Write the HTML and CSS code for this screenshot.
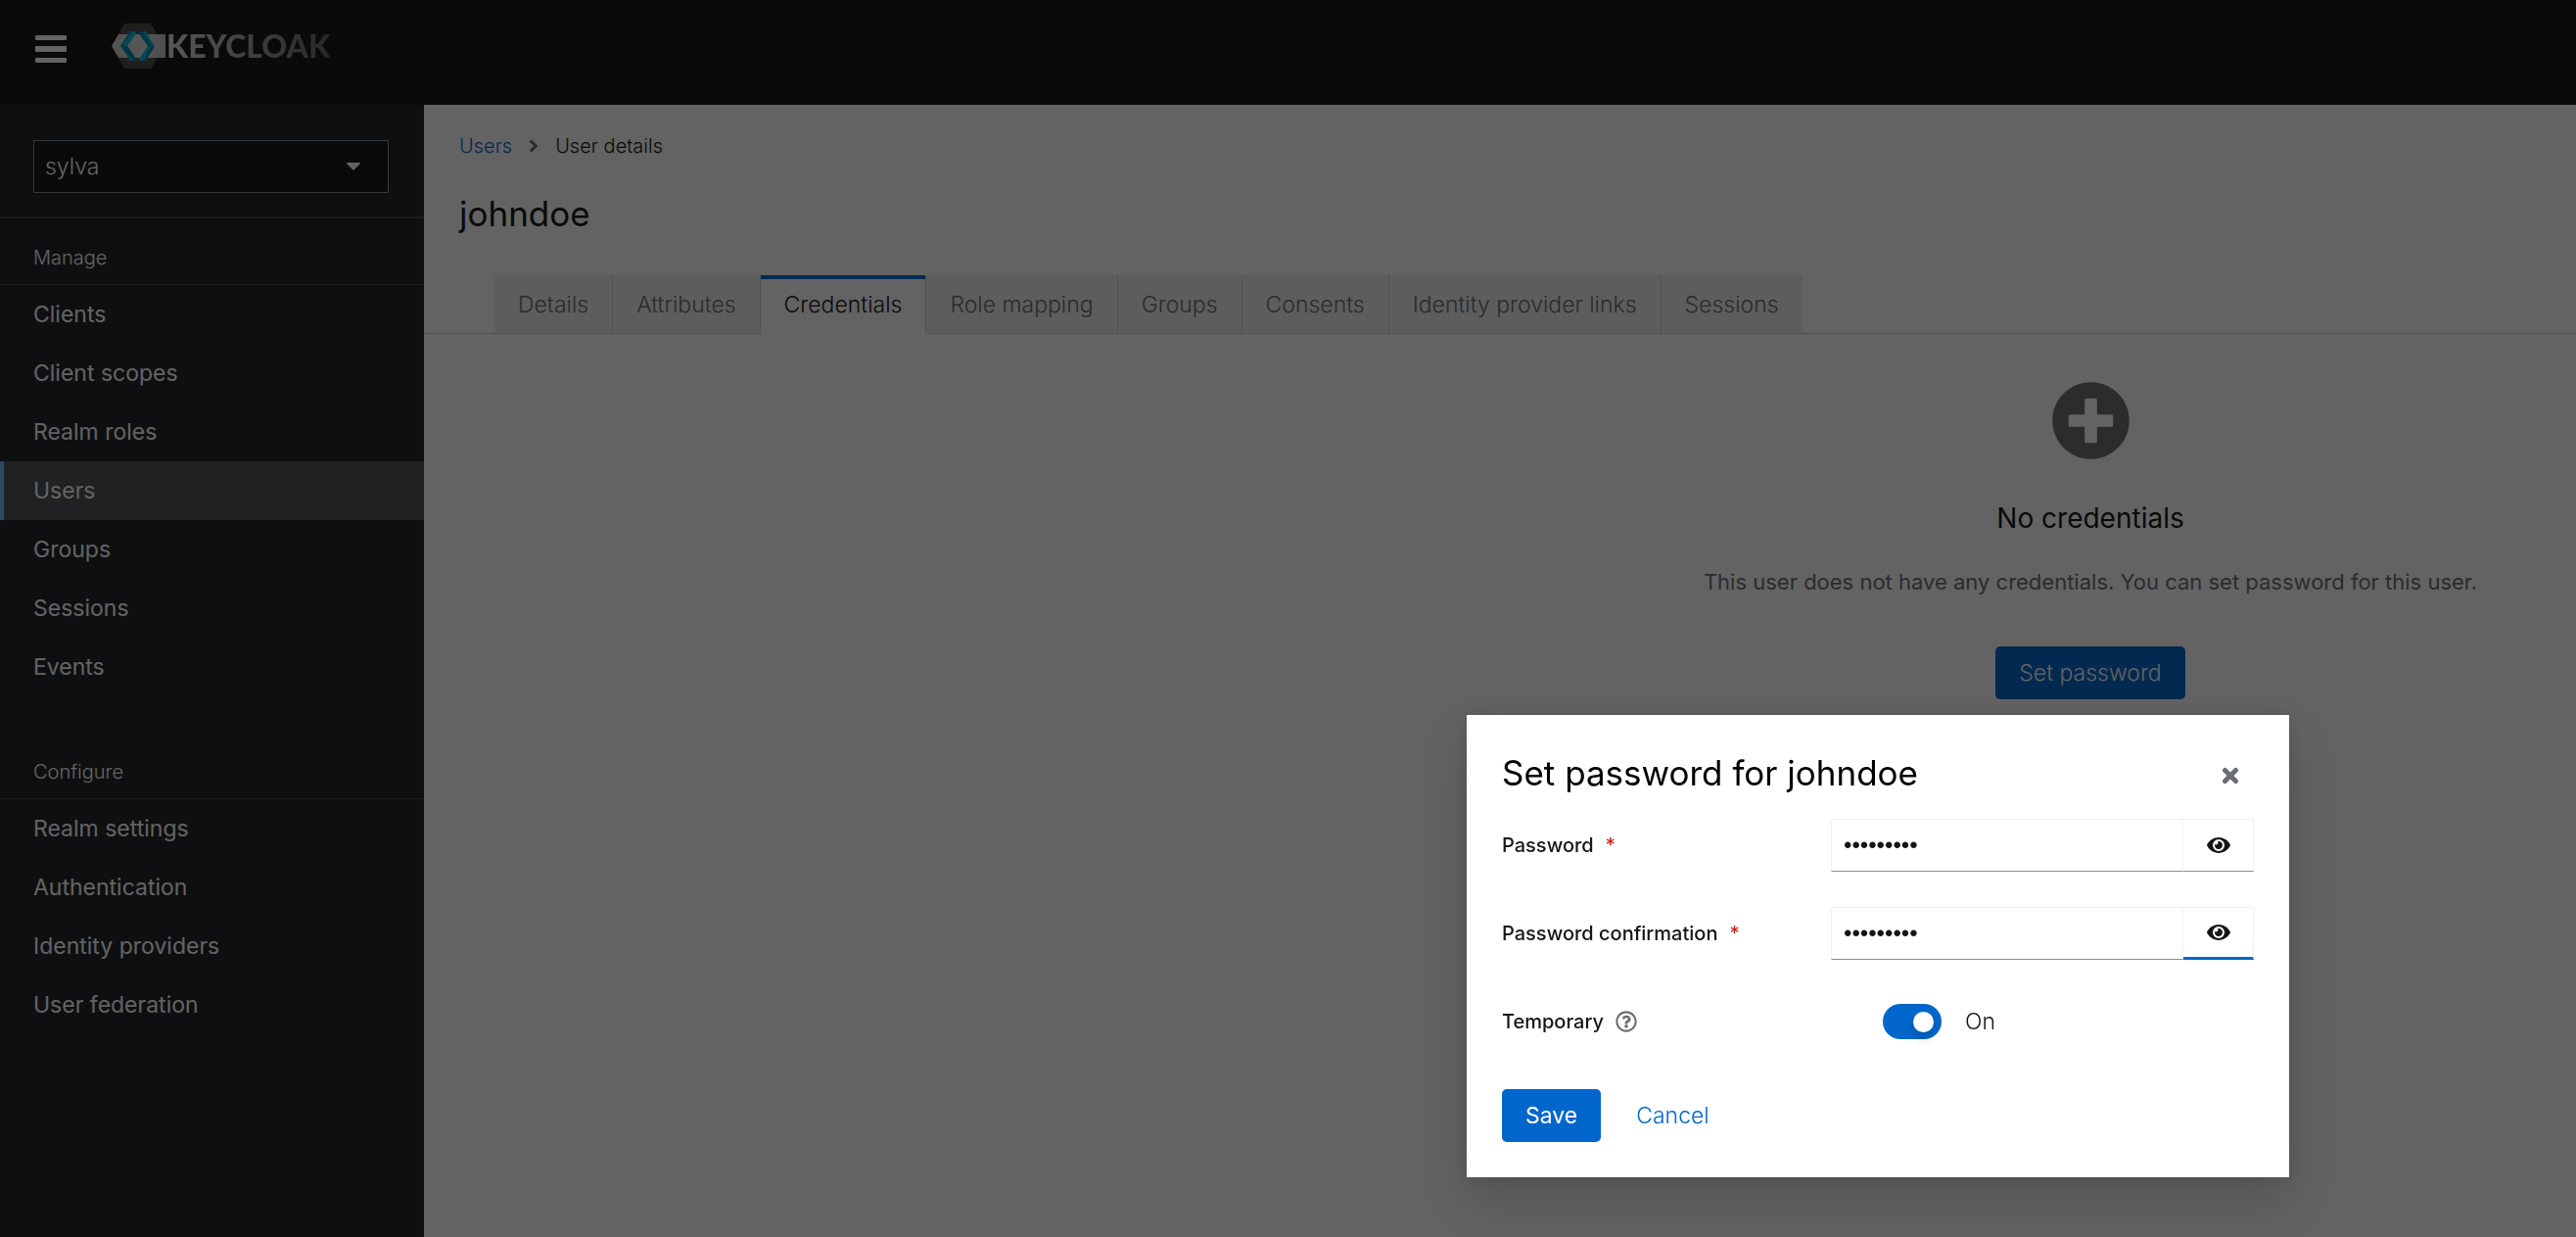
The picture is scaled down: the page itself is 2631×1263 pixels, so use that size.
FILE: index.html
```html
<!DOCTYPE html>
<html lang="en">
<head>
<meta charset="utf-8">
<title>Keycloak Administration Console</title>
<link rel="stylesheet" href="styles.css">
</head>
<body>
<div class="page">
  <header class="masthead">
    <button class="menu-toggle" type="button" aria-label="Global navigation">
      <svg width="32" height="28" viewBox="0 0 32 28"><rect width="32" height="5" rx="1"/><rect y="11" width="32" height="6" rx="1"/><rect y="23" width="32" height="5" rx="1"/></svg>
    </button>
    <a class="brand" href="#">
      <svg class="brand-mark" width="56" height="46" viewBox="0 0 56 46" aria-hidden="true">
        <defs>
          <linearGradient id="band" x1="0" x2="1"><stop offset="0" stop-color="#d0d0d0"/><stop offset=".6" stop-color="#dedede"/><stop offset="1" stop-color="#c4c4c4"/></linearGradient>
        </defs>
        <path fill="#4d4d4d" d="M13 0h27l14 23-14 23H13L0 23z"/>
        <path fill="url(#band)" d="M7 11h48v24H7L0 23z"/>
        <path fill="#00b8e3" d="M19 8h5l1 2-9 13 9 13-1 2h-5L9 23z"/>
        <path fill="#008aaa" d="M19 8h2L11 23H9zM9 23h7l9 13-1 2h-2z"/>
        <path fill="#00b8e3" d="M29 8h6l9 15-9 15h-6l-1-2 9-13-9-13z"/>
        <path fill="#008aaa" d="M44 23l-9 15h-3l8-15zM29 8l-1 2 9 13h4L32 8z"/>
      </svg>
      <span class="brand-name">KEYCLOAK</span>
    </a>
  </header>

  <nav class="sidebar" aria-label="Main">
    <div class="realm">
      <div class="realm-field">
        <select class="realm-select" aria-label="Realm"><option>sylva</option></select>
        <svg class="caret" width="14" height="8" viewBox="0 0 14 8" aria-hidden="true"><path d="M1 0h12q1 0 1 1L8 7q-1 1-2 0L0 1q0-1 1-1z"/></svg>
      </div>
    </div>
    <section class="nav-section">
      <h2 class="nav-title">Manage</h2>
      <ul class="nav-list">
        <li><a class="nav-link" href="#">Clients</a></li>
        <li><a class="nav-link" href="#">Client scopes</a></li>
        <li><a class="nav-link" href="#">Realm roles</a></li>
        <li><a class="nav-link current" href="#" aria-current="page">Users</a></li>
        <li><a class="nav-link" href="#">Groups</a></li>
        <li><a class="nav-link" href="#">Sessions</a></li>
        <li><a class="nav-link" href="#">Events</a></li>
      </ul>
    </section>
    <section class="nav-section">
      <h2 class="nav-title">Configure</h2>
      <ul class="nav-list">
        <li><a class="nav-link" href="#">Realm settings</a></li>
        <li><a class="nav-link" href="#">Authentication</a></li>
        <li><a class="nav-link" href="#">Identity providers</a></li>
        <li><a class="nav-link" href="#">User federation</a></li>
      </ul>
    </section>
  </nav>

  <main class="content">
    <div class="content-head">
      <nav class="breadcrumb" aria-label="Breadcrumb">
        <a href="#">Users</a>
        <svg width="10" height="20" viewBox="0 0 256 512" aria-hidden="true"><path d="M224.3 273l-136 136c-9.4 9.4-24.6 9.4-33.9 0l-22.6-22.6c-9.4-9.4-9.4-24.6 0-33.9l96.4-96.4-96.4-96.4c-9.4-9.4-9.4-24.6 0-33.9L54.3 103c9.4-9.4 24.6-9.4 33.9 0l136 136c9.5 9.4 9.5 24.6.1 34z"/></svg>
        <span>User details</span>
      </nav>
      <h1 class="title">johndoe</h1>
    </div>
    <div class="tabs" role="tablist">
      <button class="tab" type="button" role="tab">Details</button>
      <button class="tab" type="button" role="tab">Attributes</button>
      <button class="tab selected" type="button" role="tab" aria-selected="true">Credentials</button>
      <button class="tab" type="button" role="tab">Role mapping</button>
      <button class="tab" type="button" role="tab">Groups</button>
      <button class="tab" type="button" role="tab">Consents</button>
      <button class="tab" type="button" role="tab">Identity provider links</button>
      <button class="tab" type="button" role="tab">Sessions</button>
    </div>
    <div class="tab-panel">
      <div class="empty-state">
        <svg class="empty-icon" width="81" height="81" viewBox="0 0 512 512" aria-hidden="true"><path d="M256 8C119 8 8 119 8 256s111 248 248 248 248-111 248-248S393 8 256 8zm144 276c0 6.6-5.4 12-12 12h-92v92c0 6.6-5.4 12-12 12h-56c-6.6 0-12-5.4-12-12v-92h-92c-6.6 0-12-5.4-12-12v-56c0-6.6 5.4-12 12-12h92v-92c0-6.6 5.4-12 12-12h56c6.6 0 12 5.4 12 12v92h92c6.6 0 12 5.4 12 12v56z"/></svg>
        <h2 class="empty-title">No credentials</h2>
        <p class="empty-text">This user does not have any credentials. You can set password for this user.</p>
        <button class="button primary" type="button">Set password</button>
      </div>
    </div>
  </main>
</div>

<div class="backdrop">
  <div class="modal" role="dialog" aria-modal="true" aria-labelledby="modal-title">
    <div class="modal-head">
      <h2 class="title" id="modal-title">Set password for johndoe</h2>
      <button class="close" type="button" aria-label="Close">
        <svg width="18" height="18" viewBox="0 0 18 18"><path d="M3.5 3.5l11 11M14.5 3.5l-11 11"/></svg>
      </button>
    </div>
    <form class="form">
      <div class="row">
        <label class="label" for="password">Password <span class="required" aria-hidden="true">*</span></label>
        <div class="input-group">
          <input class="text-input" id="password" type="password" value="abcdefghi">
          <button class="reveal" type="button" aria-label="Show password">
            <svg width="24" height="22" viewBox="0 0 576 512"><path d="M572.52 241.4C518.29 135.59 410.93 64 288 64S57.68 135.64 3.48 241.41a32.35 32.35 0 0 0 0 29.19C57.71 376.41 165.07 448 288 448s230.32-71.64 284.52-177.41a32.35 32.35 0 0 0 0-29.19zM288 400a144 144 0 1 1 144-144 143.93 143.93 0 0 1-144 144zm0-240a95.31 95.31 0 0 0-25.31 3.79 47.85 47.85 0 0 1-66.9 66.9A95.78 95.78 0 1 0 288 160z"/></svg>
          </button>
        </div>
      </div>
      <div class="row">
        <label class="label" for="confirmation">Password confirmation <span class="required" aria-hidden="true">*</span></label>
        <div class="input-group">
          <input class="text-input" id="confirmation" type="password" value="abcdefghi">
          <button class="reveal focused" type="button" aria-label="Show password">
            <svg width="24" height="22" viewBox="0 0 576 512"><path d="M572.52 241.4C518.29 135.59 410.93 64 288 64S57.68 135.64 3.48 241.41a32.35 32.35 0 0 0 0 29.19C57.71 376.41 165.07 448 288 448s230.32-71.64 284.52-177.41a32.35 32.35 0 0 0 0-29.19zM288 400a144 144 0 1 1 144-144 143.93 143.93 0 0 1-144 144zm0-240a95.31 95.31 0 0 0-25.31 3.79 47.85 47.85 0 0 1-66.9 66.9A95.78 95.78 0 1 0 288 160z"/></svg>
          </button>
        </div>
      </div>
      <div class="row">
        <div class="label">
          <label for="temporary">Temporary</label>
          <button class="help" type="button" aria-label="Help for Temporary">
            <svg width="22" height="22" viewBox="0 0 512 512"><path d="M256 8C119.043 8 8 119.083 8 256c0 136.997 111.043 248 248 248s248-111.003 248-248C504 119.083 392.957 8 256 8zm0 448c-110.532 0-200-89.431-200-200 0-110.495 89.472-200 200-200 110.491 0 200 89.471 200 200 0 110.53-89.431 200-200 200zm107.244-255.2c0 67.052-72.421 68.084-72.421 92.863V300c0 6.627-5.373 12-12 12h-45.647c-6.627 0-12-5.373-12-12v-8.659c0-35.745 27.1-50.034 47.579-61.516 17.561-9.845 28.324-16.541 28.324-29.579 0-17.246-21.999-28.693-39.784-28.693-23.189 0-33.894 10.977-48.942 29.969-4.057 5.12-11.46 6.071-16.666 2.124l-27.824-21.098c-5.107-3.872-6.251-11.066-2.644-16.363C184.846 131.491 214.94 112 261.794 112c49.071 0 101.45 38.304 101.45 88.8zM298 368c0 23.159-18.841 42-42 42s-42-18.841-42-42 18.841-42 42-42 42 18.841 42 42z"/></svg>
          </button>
        </div>
        <label class="switch">
          <input class="switch-input" id="temporary" type="checkbox" role="switch" checked>
          <span>On</span>
        </label>
      </div>
      <div class="actions">
        <button class="button primary save" type="button">Save</button>
        <button class="button link" type="button">Cancel</button>
      </div>
    </form>
  </div>
</div>
</body>
</html>
```
FILE: styles.css
```css
:root {
  --blue: #0066cc;
  --ink: #151515;
  --muted: #6a6e73;
  --line: #d2d2d2;
}

*,
*::before,
*::after {
  box-sizing: border-box;
}

body {
  margin: 0;
  background: #fff;
  color: var(--ink);
  font: 300 23px/36px Inter, "Liberation Sans", sans-serif;
}

h1,
h2,
p,
ul {
  margin: 0;
  padding: 0;
  font-weight: 400;
}

ul {
  list-style: none;
}

a {
  color: inherit;
  text-decoration: none;
}

button,
input,
select {
  margin: 0;
  padding: 0;
  border: 0;
  border-radius: 0;
  background: none;
  color: inherit;
  font: inherit;
}

svg {
  display: block;
  flex: none;
  fill: currentColor;
}

.page {
  display: grid;
  grid-template-columns: 433px 1fr;
  grid-template-rows: 107px 1fr;
  min-height: 100vh;
}

/* Header */
.masthead {
  grid-column: 1 / -1;
  display: flex;
  align-items: center;
  gap: 46px;
  padding: 0 36px 7px;
  background: #151515;
  color: #fff;
}

.brand {
  display: flex;
  align-items: center;
  padding-bottom: 6px;
}

.brand-name {
  background: linear-gradient(to right, #e2e2e2, #646464);
  background-clip: text;
  -webkit-background-clip: text;
  color: transparent;
  font: 900 32px/46px Lato, "Liberation Sans", sans-serif;
}

/* Sidebar */
.sidebar {
  background: #212427;
  color: #fff;
}

.realm {
  padding: 36px 36px 24px 34px;
  border-bottom: 2px solid #3c3f42;
}

.realm-field {
  display: grid;
  align-items: center;
}

.realm-select,
.caret {
  grid-area: 1 / 1;
}

.realm-select {
  height: 54px;
  padding: 0 11px;
  border: 1px solid #8a8d90;
  background: #151515;
  appearance: none;
}

.caret {
  justify-self: end;
  margin-right: 29px;
  pointer-events: none;
}

.nav-section + .nav-section {
  padding-top: 37px;
}

.nav-title {
  padding: 24px 34px 11px;
  border-bottom: 1px solid #3c3f42;
  font-size: 20px;
  font-weight: 300;
  line-height: 32px;
}

.nav-link {
  display: block;
  padding: 12px 30px;
  border-left: 4px solid transparent;
}

.nav-link.current {
  border-color: #73bcf7;
  background: #4f5255;
}

/* Content */
.content {
  background: #fff;
}

.content-head {
  padding: 26px 36px 39px;
}

.breadcrumb {
  display: flex;
  align-items: center;
  gap: 17px;
  padding-bottom: 30px;
  font-size: 20px;
  line-height: 32px;
}

.breadcrumb a {
  color: var(--blue);
}

.breadcrumb svg {
  color: var(--muted);
}

.title {
  font-size: 35px;
  line-height: 47px;
}

.tabs {
  display: flex;
  padding-left: 72px;
  box-shadow: inset 0 -1px var(--line);
}

.tab {
  padding: 12px 24px 11px;
  border-right: 1px solid var(--line);
  border-bottom: 1px solid var(--line);
  background: #f0f0f0;
  color: var(--muted);
}

.tab:last-child {
  border-right: 0;
}

.tab.selected {
  border-bottom-color: #fff;
  background: #fff;
  box-shadow: inset 0 4px var(--blue);
  color: var(--ink);
}

.tab-panel {
  display: grid;
  grid-template-columns: 1206fr 992fr;
}

.empty-state {
  grid-column: 2;
  display: flex;
  flex-direction: column;
  align-items: center;
  padding: 48px 24px;
  text-align: center;
}

.empty-icon {
  color: var(--muted);
}

.empty-title {
  padding: 36px 0 24px;
  font-size: 28px;
  line-height: 46px;
}

.empty-text {
  padding-bottom: 48px;
  color: var(--muted);
  font-size: 22px;
}

.button {
  height: 54px;
  padding: 0 24px;
  border-radius: 5px;
}

.button.primary {
  background: var(--blue);
  color: #fff;
}

.button.link {
  color: var(--blue);
}

.button.save {
  font-weight: 400;
}

/* Modal */
.backdrop {
  position: fixed;
  inset: 0;
  display: grid;
  grid-template-columns: 1498fr 840px 293fr;
  grid-template-rows: 730fr auto 61fr;
  background: rgba(3, 3, 3, .62);
}

.modal {
  grid-area: 2 / 2;
  padding: 36px;
  background: #fff;
  box-shadow: 0 24px 48px rgba(3, 3, 3, .16), 0 0 12px rgba(3, 3, 3, .1);
}

.modal-head {
  display: flex;
  justify-content: space-between;
  padding-bottom: 23px;
}

.modal-head .title {
  color: #000;
}

.close {
  display: grid;
  place-items: center;
  width: 48px;
  padding-top: 5px;
  color: var(--muted);
}

.close svg {
  stroke: currentColor;
  stroke-width: 5;
  stroke-linecap: round;
}

.form {
  display: grid;
  gap: 36px;
}

.row {
  display: grid;
  grid-template-columns: 336fr 432fr;
  align-items: center;
  min-height: 54px;
}

.label {
  display: flex;
  align-items: center;
  gap: 12px;
  font-size: 20px;
  font-weight: 500;
}

.required {
  color: #c9190b;
  font-weight: 400;
}

.help {
  color: var(--muted);
}

.input-group {
  display: flex;
  min-width: 0;
  height: 54px;
}

.text-input,
.reveal {
  border: 1px solid #f0f0f0;
  border-bottom-color: #8a8d90;
}

.text-input {
  flex: 1;
  min-width: 0;
  padding: 0 12px;
  font-family: "Liberation Sans", sans-serif;
  font-size: 24px;
}

.reveal {
  display: grid;
  place-items: center;
  width: 72px;
  border-left: 0;
}

.reveal.focused {
  border-bottom: 3px solid var(--blue);
}

.switch {
  display: flex;
  align-items: center;
  gap: 24px;
  padding-left: 53px;
}

.switch-input {
  display: flex;
  align-items: center;
  width: 60px;
  height: 36px;
  padding: 0 8px;
  border-radius: 18px;
  background: #8a8d90;
  appearance: none;
}

.switch-input::before {
  content: "";
  width: 21px;
  height: 21px;
  border-radius: 50%;
  background: #fff;
  box-shadow: 0 6px 12px rgba(3, 3, 3, .16);
}

.switch-input:checked {
  justify-content: flex-end;
  background: var(--blue);
}

.actions {
  display: flex;
  gap: 12px;
  padding-top: 6px;
}
```
